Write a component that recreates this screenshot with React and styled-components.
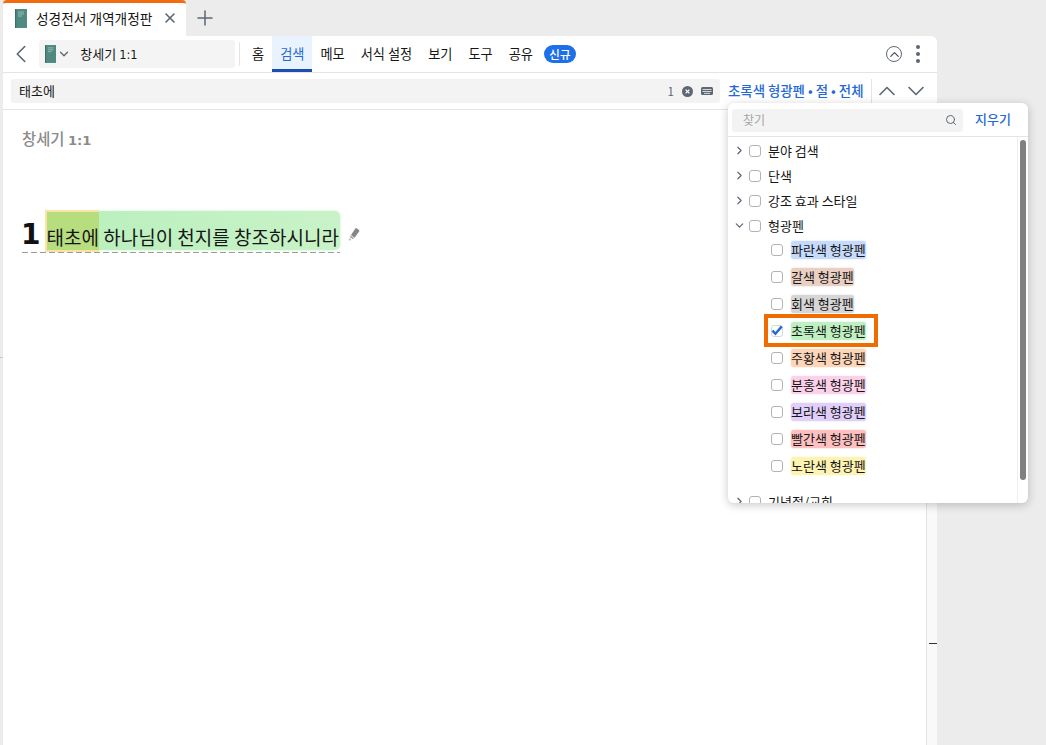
import styled, { createGlobalStyle } from 'styled-components';
import { ChevronDown, ChevronLeft, ChevronRight, ChevronUp, Plus, Search, X } from 'lucide-react';

const GlobalStyle = createGlobalStyle`
  html, body {
    margin: 0;
    padding: 0;
    height: 100%;
    overflow: hidden;
    background: #ececec;
    color: #161616;
    font-family: 'Noto Sans CJK KR', 'Noto Sans', sans-serif;
  }
  svg {
    flex: none;
  }
`;

const TABS = ['홈', '검색', '메모', '서식 설정', '보기', '도구', '공유'];

const FILTERS = [
  { label: '분야 검색' },
  { label: '단색' },
  { label: '강조 효과 스타일' },
  { label: '형광펜', open: true },
];

const PENS = [
  { label: '파란색 형광펜', color: '#c6dbfb' },
  { label: '갈색 형광펜', color: '#e9d0c3' },
  { label: '회색 형광펜', color: '#d6d6d6' },
  { label: '초록색 형광펜', color: '#bff0c1', checked: true },
  { label: '주황색 형광펜', color: '#fdd5b8' },
  { label: '분홍색 형광펜', color: '#fbd2ea' },
  { label: '보라색 형광펜', color: '#e0cffb' },
  { label: '빨간색 형광펜', color: '#fcc0c0' },
  { label: '노란색 형광펜', color: '#fdf3b2' },
];

function BookIcon({ height }) {
  return (
    <svg width={height * 0.63} height={height} viewBox="0 0 12 19">
      <rect width="12" height="19" fill="#4f8a80" />
      <rect width="1.2" height="19" fill="#3c6f67" />
      <path d="M3 3h6M3 5h6M3 7h4" stroke="#a9c9c3" strokeWidth="0.8" />
    </svg>
  );
}

function ClearIcon() {
  return (
    <svg width="11" height="11" viewBox="0 0 11 11">
      <circle cx="5.5" cy="5.5" r="5.5" fill="#5d6675" />
      <path d="M3.6 3.6l3.8 3.8M7.4 3.6l-3.8 3.8" stroke="#fff" strokeWidth="1.3" />
    </svg>
  );
}

function KeyboardIcon() {
  return (
    <svg width="12" height="8" viewBox="0 0 12 8">
      <rect width="12" height="8" rx="1.5" fill="#5d6675" />
      <path d="M1.5 2.5h9M1.5 4.5h9" stroke="#f1f1f1" strokeWidth="0.8" />
      <path d="M3 6.4h6" stroke="#f1f1f1" strokeWidth="0.8" />
    </svg>
  );
}

function PenIcon() {
  return (
    <svg width="12" height="14" viewBox="0 0 12 14">
      <path d="M7.4 0.6c0.5-0.5 1-0.5 1.6-0.1l1.9 1.5c0.6 0.5 0.6 1 0.2 1.6L6.6 9.8 3 7z" fill="#868686" />
      <path d="M2.8 7.6l3.2 2.5-1.1 1.2-3.1-2.4z" fill="#a6a6a6" />
      <path d="M1.6 9.9l1.8 1.4-0.9 1.1-2.2-0.2z" fill="#c4c4c4" />
    </svg>
  );
}

export default function App() {
  return (
    <>
      <GlobalStyle />
      <Page>
        <TabStrip>
          <DocTab>
            <BookIcon height={19} />
            <DocTitle>성경전서 개역개정판</DocTitle>
            <X size={16} strokeWidth={2.4} color="#5d6675" />
          </DocTab>
          <NewTab>
            <Plus size={24} strokeWidth={1.5} />
          </NewTab>
        </TabStrip>

        <Panel>
          <Toolbar>
            <BackButton>
              <ChevronLeft size={30} strokeWidth={1.3} />
            </BackButton>
            <Location>
              <BookIcon height={18} />
              <ChevronDown size={14} strokeWidth={2.2} color="#5d6675" />
              <LocationText>창세기 <Digits>1:1</Digits></LocationText>
            </Location>
            <Divider />
            <NavTabs>
              {TABS.map((tab) => (
                <NavTab key={tab} $active={tab === '검색'}>{tab}</NavTab>
              ))}
            </NavTabs>
            <NewBadge>신규</NewBadge>
            <ToolbarEnd>
              <CircleUp>
                <ChevronUp size={15} strokeWidth={1.8} />
              </CircleUp>
              <MoreDots>
                <i /><i /><i />
              </MoreDots>
            </ToolbarEnd>
          </Toolbar>

          <SearchRow>
            <SearchField>
              <SearchText>태초에</SearchText>
              <SearchCount>1</SearchCount>
              <ClearIcon />
              <KeyboardIcon />
            </SearchField>
            <ScopeLink>초록색 형광펜 • 절 • 전체</ScopeLink>
            <StepButtons>
              <ChevronUp size={28} strokeWidth={1.4} />
              <ChevronDown size={28} strokeWidth={1.4} />
            </StepButtons>
          </SearchRow>

          <Body>
            <Content>
              <Heading>창세기 <HeadingDigits>1:1</HeadingDigits></Heading>
              <Verse>
                <VerseNumber>1</VerseNumber>
                <VerseMark>
                  <SearchHit>태초에</SearchHit> 하나님이 천지를 창조하시니라
                </VerseMark>
                <PenIcon />
              </Verse>
            </Content>
            <Gutter>
              <GutterTick />
            </Gutter>
          </Body>
        </Panel>

        <EdgeTick />

        <FilterMenu>
          <MenuHeader>
            <MenuSearch>
              <span>찾기</span>
              <Search size={12} strokeWidth={2} color="#5d6675" />
            </MenuSearch>
            <ClearLink>지우기</ClearLink>
          </MenuHeader>
          <MenuBody>
            <MenuList>
              {FILTERS.map((item) => (
                <FilterRow key={item.label}>
                  {item.open
                    ? <ChevronDown size={13} strokeWidth={2.2} color="#5d6675" />
                    : <ChevronRight size={13} strokeWidth={2.2} color="#5d6675" />}
                  <Box />
                  <span>{item.label}</span>
                </FilterRow>
              ))}
              <PenList>
                {PENS.map((pen) => (
                  <PenRow key={pen.label} $marked={pen.checked}>
                    <Box $checked={pen.checked}>
                      {pen.checked && (
                        <svg width="12" height="11" viewBox="0 0 12 11">
                          <path d="M1.4 5.6l3 3.2L10.8 1.4" fill="none" stroke="#2469d6" strokeWidth="2.4" />
                        </svg>
                      )}
                    </Box>
                    <PenLabel $color={pen.color}>{pen.label}</PenLabel>
                  </PenRow>
                ))}
              </PenList>
              <LastRow>
                <ChevronRight size={13} strokeWidth={2.2} color="#5d6675" />
                <Box />
                <span>기념절/교회</span>
              </LastRow>
            </MenuList>
            <MenuScroll>
              <MenuThumb />
            </MenuScroll>
          </MenuBody>
        </FilterMenu>
      </Page>
    </>
  );
}

const Page = styled.div`
  position: relative;
  width: 1046px;
  height: 745px;
  overflow: hidden;
`;

const TabStrip = styled.div`
  display: flex;
  align-items: flex-start;
  height: 36px;
  padding-left: 3px;
`;

const DocTab = styled.div`
  display: flex;
  align-items: center;
  width: 183px;
  height: 36px;
  box-sizing: border-box;
  padding: 0 0 3px 12px;
  background: #fff;
  border-top: 3px solid #f26b0f;
  border-radius: 4px 4px 0 0;
  svg:last-child {
    margin-left: 10px;
  }
`;

const DocTitle = styled.span`
  margin-left: 9px;
  font-size: 13.7px;
  white-space: nowrap;
`;

const NewTab = styled.div`
  display: flex;
  align-items: center;
  height: 36px;
  margin-left: 7px;
  color: #5d6675;
`;

const Panel = styled.div`
  display: flex;
  flex-direction: column;
  width: 934px;
  height: 709px;
  margin-left: 3px;
  background: #fff;
  border-radius: 0 6px 0 0;
`;

const Toolbar = styled.div`
  display: flex;
  align-items: center;
  flex: none;
  height: 36px;
  border-bottom: 1px solid #e4e4e4;
`;

const BackButton = styled.div`
  display: flex;
  justify-content: center;
  width: 36px;
  padding-left: 1px;
  margin-left: -1px;
  color: #5d6675;
`;

const Location = styled.div`
  display: flex;
  align-items: center;
  gap: 1px;
  width: 196px;
  height: 28px;
  box-sizing: border-box;
  padding-left: 6px;
  background: #f4f4f4;
  border-radius: 3px;
`;

const LocationText = styled.span`
  margin-left: 8px;
  padding-bottom: 2px;
  font-size: 13px;
`;

const Digits = styled.span`
  font-family: 'DejaVu Sans', sans-serif;
  font-size: 0.88em;
`;

const HeadingDigits = styled(Digits)`
  font-weight: 700;
  font-size: 0.85em;
`;

const Divider = styled.div`
  width: 1px;
  height: 24px;
  margin: 0 4px;
  background: #e4e4e4;
`;

const NavTabs = styled.div`
  display: flex;
  align-self: stretch;
`;

const NavTab = styled.div`
  display: flex;
  align-items: center;
  padding: 0 8px 2px;
  font-size: 13.2px;
  color: ${(props) => (props.$active ? '#2469d6' : '#161616')};
  background: ${(props) => (props.$active ? '#e9f3fd' : 'transparent')};
  box-shadow: ${(props) => (props.$active ? 'inset 0 -3px 0 #1a4fb0' : 'none')};
`;

const NewBadge = styled.div`
  display: flex;
  align-items: center;
  justify-content: center;
  width: 32px;
  height: 18px;
  margin-left: 3px;
  font-size: 11.5px;
  font-weight: 500;
  color: #fff;
  background: #1f6fe8;
  border-radius: 9px;
`;

const ToolbarEnd = styled.div`
  display: flex;
  align-items: center;
  gap: 14px;
  margin-left: auto;
  padding-right: 17px;
`;

const CircleUp = styled.div`
  display: flex;
  align-items: center;
  justify-content: center;
  width: 14px;
  height: 14px;
  border: 1.3px solid #5d6675;
  border-radius: 50%;
  color: #3f4652;
`;

const MoreDots = styled.div`
  display: flex;
  flex-direction: column;
  gap: 3px;
  i {
    width: 4px;
    height: 4px;
    background: #5d6675;
    border-radius: 50%;
  }
`;

const SearchRow = styled.div`
  display: flex;
  align-items: center;
  flex: none;
  height: 36px;
  border-bottom: 1px solid #e4e4e4;
`;

const SearchField = styled.div`
  display: flex;
  align-items: center;
  gap: 8px;
  width: 709px;
  height: 24px;
  box-sizing: border-box;
  margin-left: 8px;
  padding: 0 7px 0 8px;
  background: #f3f3f3;
  border-radius: 3px;
`;

const SearchText = styled.span`
  flex: 1;
  padding-bottom: 2px;
  font-size: 13px;
`;

const SearchCount = styled.span`
  font-size: 11.5px;
  color: #5d6675;
`;

const ScopeLink = styled.div`
  margin-left: 8px;
  padding-bottom: 2px;
  font-size: 13.4px;
  font-weight: 500;
  color: #2469d6;
  white-space: nowrap;
`;

const StepButtons = styled.div`
  display: flex;
  align-items: center;
  gap: 1px;
  height: 24px;
  margin-left: 8px;
  padding-left: 1px;
  border-left: 1px solid #e4e4e4;
  color: #5d6675;
`;

const Body = styled.div`
  display: flex;
  flex: 1;
  min-height: 0;
`;

const Content = styled.div`
  flex: 1;
  padding: 16px 0 0 19px;
`;

const Heading = styled.div`
  font-size: 15.4px;
  font-weight: 500;
  line-height: 24px;
  color: #8b8b8b;
`;

const Verse = styled.div`
  display: flex;
  align-items: flex-end;
  width: fit-content;
  height: 44px;
  margin-top: 56px;
  background: repeating-linear-gradient(90deg, #9a9a9a 0 6px, transparent 6px 9px) bottom / 100% 1px no-repeat;
  svg {
    margin: 0 -20px 11px 8px;
  }
`;

const VerseNumber = styled.span`
  margin: 0 6px 0 -1px;
  padding-bottom: 2px;
  font-family: 'DejaVu Sans', sans-serif;
  font-size: 28px;
  font-weight: 700;
  line-height: 32px;
  color: #111;
`;

const VerseMark = styled.span`
  margin-bottom: 3px;
  padding: 12px 1px 0 0;
  font-size: 19px;
  line-height: 27px;
  white-space: nowrap;
  background: linear-gradient(90deg, #b9efbb, #c8f3c8);
  border-radius: 0 5px 5px 0;
  box-shadow: 0 0 3px #c8f3c8;
`;

const SearchHit = styled.span`
  margin-left: -1px;
  padding: 13px 0 2px 1px;
  background: #b6dd7e;
  box-shadow: inset 2px 2px 0 #fbe2a6, inset 0 -2px 0 #fbe2a6;
`;

const GutterTick = styled.div`
  width: 8px;
  height: 1px;
  margin: 533px 0 0 2px;
  background: #333;
`;

const Gutter = styled.div`
  flex: none;
  width: 10px;
  background: #f9f9f9;
  border-left: 1px solid #e4e4e4;
`;

const EdgeTick = styled.div`
  position: absolute;
  left: 0;
  top: 357px;
  width: 3px;
  height: 1px;
  background: #c8c8c8;
`;

const FilterMenu = styled.div`
  position: absolute;
  left: 728px;
  top: 103px;
  display: flex;
  flex-direction: column;
  width: 300px;
  height: 400px;
  overflow: hidden;
  background: #fff;
  border-radius: 6px;
  box-shadow: 0 2px 10px rgba(0, 0, 0, 0.22);
`;

const MenuHeader = styled.div`
  display: flex;
  align-items: flex-start;
  flex: none;
  height: 34px;
  box-sizing: border-box;
  padding: 6px 17px 0 4px;
  border-bottom: 1px solid #e4e4e4;
`;

const MenuSearch = styled.div`
  display: flex;
  align-items: center;
  justify-content: space-between;
  width: 231px;
  height: 23px;
  box-sizing: border-box;
  padding: 0 6px 2px 11px;
  font-size: 12px;
  color: #a5a5a5;
  background: #f3f3f3;
  border-radius: 3px;
`;

const ClearLink = styled.div`
  margin-left: auto;
  font-size: 13px;
  font-weight: 500;
  line-height: 19px;
  color: #2469d6;
`;

const MenuBody = styled.div`
  display: flex;
  flex: 1;
  min-height: 0;
`;

const MenuList = styled.div`
  flex: 1;
  padding-top: 1px;
  overflow: hidden;
  font-size: 13px;
`;

const MenuScroll = styled.div`
  flex: none;
  width: 8px;
  padding: 3px 0 0 2px;
  border-left: 1px solid #eeeeee;
`;

const MenuThumb = styled.div`
  width: 6px;
  height: 340px;
  background: #808080;
  border-radius: 4px;
`;

const FilterRow = styled.div`
  display: flex;
  align-items: center;
  height: 25px;
  padding-left: 5px;
  & > span {
    margin-left: 7px;
  }
  & > div {
    margin-left: 3px;
  }
`;

const PenList = styled.div`
  margin-top: -2px;
`;

const LastRow = styled(FilterRow)`
  margin-top: 10px;
`;

const PenRow = styled.div`
  position: relative;
  display: flex;
  align-items: center;
  gap: 8px;
  width: max-content;
  height: 27px;
  padding-left: 43px;
  &::after {
    content: '';
    display: ${(props) => (props.$marked ? 'block' : 'none')};
    position: absolute;
    left: 36px;
    right: -12px;
    top: -3px;
    bottom: -3px;
    border: 4px solid #ef6c00;
    pointer-events: none;
  }
`;

const Box = styled.div`
  display: flex;
  align-items: center;
  justify-content: center;
  flex: none;
  width: 10px;
  height: 10px;
  background: #fff;
  border: 1px solid ${(props) => (props.$checked ? '#d8d8d8' : '#b3b3b3')};
  border-radius: 3px;
`;

const PenLabel = styled.span`
  background: ${(props) => props.$color};
  border-radius: 3px;
  box-shadow: 0 0 2px ${(props) => props.$color};
  line-height: 18px;
`;
